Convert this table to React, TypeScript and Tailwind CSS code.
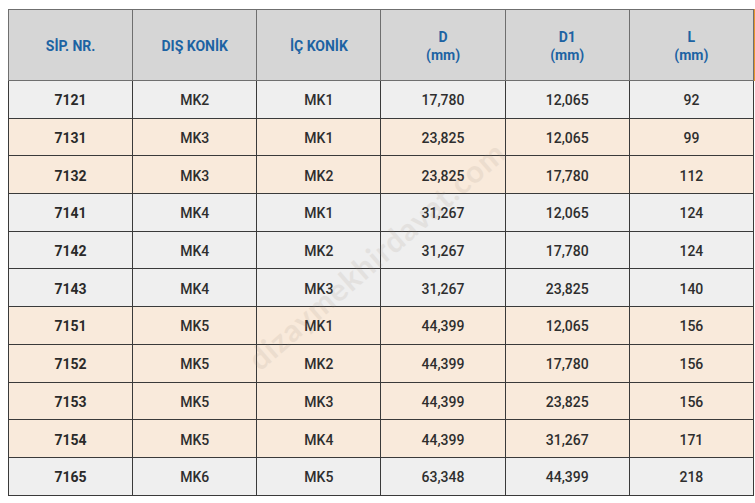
const rows: [string, string, string, string, string, string, "g" | "p"][] = [
  ["7121", "MK2", "MK1", "17,780", "12,065", "92", "g"],
  ["7131", "MK3", "MK1", "23,825", "12,065", "99", "p"],
  ["7132", "MK3", "MK2", "23,825", "17,780", "112", "p"],
  ["7141", "MK4", "MK1", "31,267", "12,065", "124", "g"],
  ["7142", "MK4", "MK2", "31,267", "17,780", "124", "g"],
  ["7143", "MK4", "MK3", "31,267", "23,825", "140", "g"],
  ["7151", "MK5", "MK1", "44,399", "12,065", "156", "p"],
  ["7152", "MK5", "MK2", "44,399", "17,780", "156", "p"],
  ["7153", "MK5", "MK3", "44,399", "23,825", "156", "p"],
  ["7154", "MK5", "MK4", "44,399", "31,267", "171", "p"],
  ["7165", "MK6", "MK5", "63,348", "44,399", "218", "g"],
]

const headers: [string, string?][] = [
  ["SİP. NR."],
  ["DIŞ KONİK"],
  ["İÇ KONİK"],
  ["D", "(mm)"],
  ["D1", "(mm)"],
  ["L", "(mm)"],
]

export default function App() {
  return (
    <div className="relative h-[503px] w-[755px] overflow-hidden bg-white pl-[8px] pt-[9px] font-['Roboto',sans-serif]">
      <div className="absolute right-0 top-[9px] h-[72px] w-px bg-[#e8962e]" />
      <table className="w-[746px] table-fixed border-collapse">
        <thead>
          <tr className="h-[71px] bg-[#d6d6d6]">
            {headers.map(([a, b], i) => (
              <th
                key={i}
                className="border border-[#6f6f6f] p-0 pt-[1px] text-center text-[14px] font-bold leading-[18px] text-[#1d63a3]"
              >
                <div>{a}</div>
                {b && <div>{b}</div>}
              </th>
            ))}
          </tr>
        </thead>
        <tbody>
          {rows.map((r) => (
            <tr key={r[0]} className={r[6] === "g" ? "h-[37.7px] bg-[#efefef]" : "h-[37.7px] bg-[#f9eadb]"}>
              {r.slice(0, 6).map((c, j) => (
                <td
                  key={j}
                  className={
                    j === 0
                      ? "border-[1.5px] border-[#3a3a3a] p-0 pt-[3px] text-center text-[14px] font-bold text-[#2a2a2a]"
                      : "border-[1.5px] border-[#3a3a3a] p-0 pt-[3px] text-center text-[14px] font-medium text-[#2e2e2e]"
                  }
                >
                  {c}
                </td>
              ))}
            </tr>
          ))}
        </tbody>
      </table>
      <div className="pointer-events-none absolute left-[212px] top-[232px] origin-center -rotate-[41deg] select-none text-[31px] font-bold tracking-[1px] text-[#9a8a7a] opacity-[0.13] font-['Lato',sans-serif]">
        dizaymekhirdavat.com
      </div>
    </div>
  )
}
